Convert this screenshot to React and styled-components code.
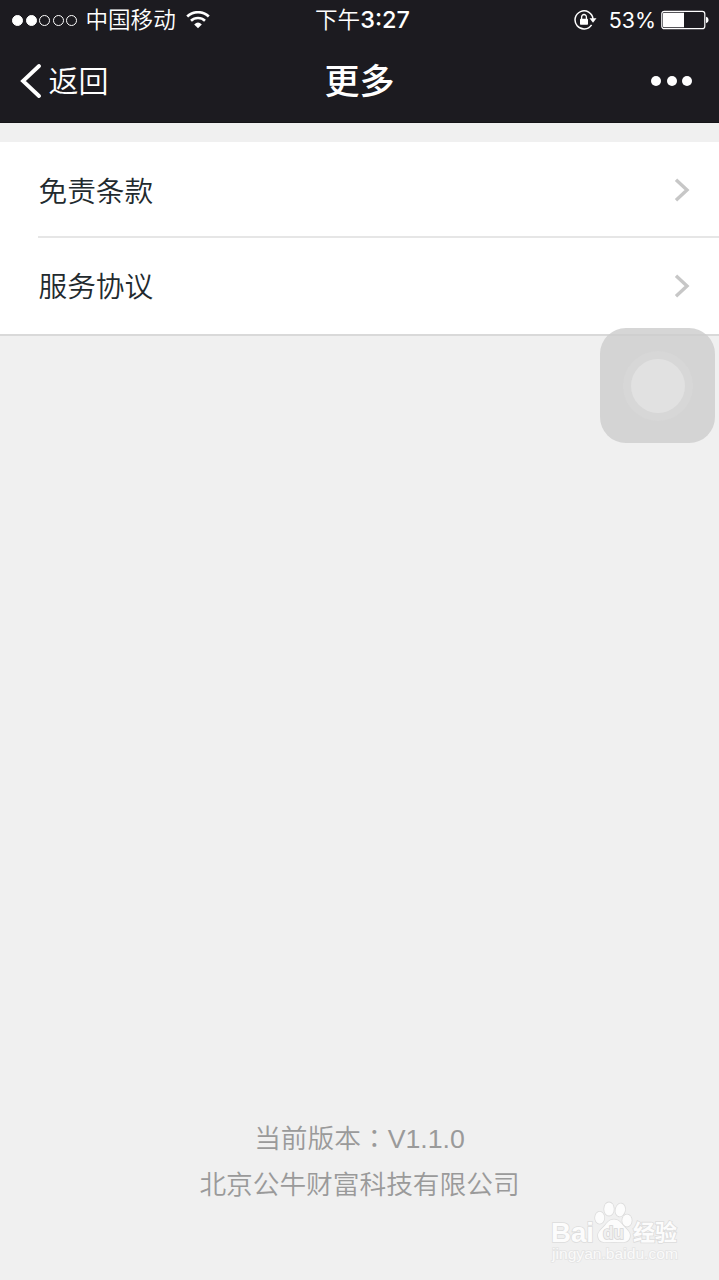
import styled, { createGlobalStyle } from "styled-components";

const GlobalStyle = createGlobalStyle`
  * {
    box-sizing: border-box;
  }

  body {
    margin: 0;
    background-color: #f0f0f0;
    font-family: "Inter", "Noto Sans CJK SC", sans-serif;
  }
`;

const Wrapper = styled.div`
  position: relative;
  display: flex;
  flex-direction: column;
  width: 719px;
  height: 1280px;
  overflow: hidden;
  background-color: #f0f0f0;
`;

const Header = styled.header`
  height: 123px;
  background-color: #1c1b20;
  border-bottom: 1px solid #141317;
  color: white;
`;

const StatusBar = styled.div`
  display: grid;
  grid-template-columns: 1fr auto 1fr;
  align-items: center;
  height: 40px;
  padding: 0 10px 0 12px;
  font-size: 22.6px;
  line-height: 40px;
`;

const StatusSide = styled.div`
  display: flex;
  align-items: center;
  justify-content: ${(props) => (props.$end ? "flex-end" : "flex-start")};
`;

const Signal = styled.div`
  display: flex;
  gap: 2.6px;
  margin-right: 8px;
`;

const SignalDot = styled.span`
  width: 11px;
  height: 11px;
  border: 1px solid white;
  border-radius: 50%;
  background-color: ${(props) => (props.$on ? "white" : "transparent")};
`;

const Carrier = styled.span`
  margin-right: 10px;
  font-weight: 350;
`;

const Time = styled.span`
  display: flex;
  padding-left: 4px;
  font-weight: 350;

  b {
    font-size: 23.5px;
    font-weight: 500;
  }
`;

const Percent = styled.span`
  margin: 0 5px 0 12px;
  font-size: 21.4px;
`;

const NavBar = styled.nav`
  display: grid;
  grid-template-columns: 1fr auto 1fr;
  align-items: center;
  height: 82px;
  padding: 0 27px 0 20px;
`;

const Back = styled.div`
  display: flex;
  align-items: center;
  gap: 6.5px;
  font-size: 30px;
  font-weight: 350;
  line-height: 40px;
`;

const Title = styled.h1`
  margin: 0;
  padding-left: 7px;
  font-size: 35px;
  font-weight: 500;
  line-height: 40px;
`;

const More = styled.div`
  display: flex;
  justify-content: flex-end;
  gap: 5.5px;
`;

const MoreDot = styled.span`
  width: 10px;
  height: 10px;
  border-radius: 50%;
  background-color: white;
`;

const List = styled.div`
  margin-top: 19px;
  padding-left: 38px;
  background-color: white;
  border-bottom: 2px solid #d9d9d9;
`;

const Row = styled.div`
  display: flex;
  align-items: center;
  justify-content: space-between;
  height: 96px;
  padding-right: 29px;
  padding-left: 0.5px;
  color: #222a2e;
  font-size: 28.7px;
  font-weight: 350;

  svg {
    margin-top: 2px;
  }

  &:not(:last-child) {
    border-bottom: 2px solid #e6e6e6;
  }

  &:last-child {
    padding-bottom: 3px;
  }
`;

const TouchButton = styled.div`
  position: absolute;
  top: 328px;
  left: 600px;
  display: grid;
  place-items: center;
  width: 115px;
  height: 115px;
  border-radius: 26px;
  background-color: rgba(205, 205, 205, 0.82);
`;

const Ring = styled.div`
  display: grid;
  place-items: center;
  width: ${(props) => props.$size}px;
  height: ${(props) => props.$size}px;
  border-radius: 50%;
  background-color: ${(props) => props.$color};
`;

const Footer = styled.footer`
  margin-top: auto;
  margin-bottom: 72px;
  color: #9a9a9a;
  font-family: "Liberation Sans", "Noto Sans CJK SC", sans-serif;
  font-size: 26.7px;
  font-weight: 350;
  line-height: 46px;
  text-align: center;

  p {
    margin: 0;
  }
`;

// the traditional face keeps the colon in the middle of its box
const Colon = styled.span`
  font-family: "Noto Sans CJK TC", sans-serif;
`;

const Watermark = styled.svg`
  position: absolute;
  left: 545px;
  top: 1196px;
`;

const rows = ["免责条款", "服务协议"];

function Wifi() {
  return (
    <svg width="24" height="18" viewBox="0 0 24 18" fill="none" stroke="white">
      <path d="M1.2 5.5a15.8 15.8 0 0 1 21.6 0" strokeWidth="2.7" />
      <path d="M5 9.8a10.2 10.2 0 0 1 14 0" strokeWidth="2.6" />
      <path d="M8.2 13.4Q12 9.6 15.8 13.4L12 17.2Z" fill="white" stroke="none" />
    </svg>
  );
}

function RotationLock() {
  return (
    <svg width="23" height="20" viewBox="0 0 23 20" fill="none" stroke="white">
      <path d="M17.6 14.8A9 9 0 1 1 19 9" strokeWidth="1.5" />
      <path d="M15.5 8.2h7L19 12.8Z" fill="white" stroke="none" />
      <rect x="6" y="8.7" width="8" height="6" rx="0.7" fill="white" stroke="none" />
      <path d="M7.6 9V6.9a2.4 2.4 0 0 1 4.8 0V9" strokeWidth="1.3" />
    </svg>
  );
}

function Battery() {
  return (
    <svg width="48" height="20" viewBox="0 0 48 20">
      <rect x="0.8" y="1.3" width="43" height="17.4" rx="2.5" fill="none" stroke="white" strokeWidth="1.2" />
      <path d="M3 2.8h20v14.4H3a1 1 0 0 1-1-1V3.8a1 1 0 0 1 1-1Z" fill="white" />
      <path d="M45 6.8q2.6.6 2.6 3.2T45 13.2Z" fill="white" />
    </svg>
  );
}

function ChevronRight() {
  return (
    <svg width="16" height="24" viewBox="0 0 16 24" fill="none">
      <path d="M2 1.8 13 12 2 22.2" stroke="#c7c7c7" strokeWidth="3.4" />
    </svg>
  );
}

function BaiduMark() {
  return (
    <Watermark width="150" height="72" viewBox="0 0 150 72">
      <g
        fill="#fcfcfc"
        stroke="#dcdcdc"
        strokeWidth="1.6"
        paintOrder="stroke"
        fontFamily='"Liberation Sans", "Noto Sans CJK SC", sans-serif'
      >
        <text x="6" y="45.5" fontSize="28" fontWeight="700" textLength="43" lengthAdjust="spacingAndGlyphs">
          Bai
        </text>
        <ellipse cx="54.7" cy="21.8" rx="4.6" ry="6" />
        <ellipse cx="64" cy="13" rx="4.8" ry="6.6" />
        <ellipse cx="75.3" cy="14" rx="4.7" ry="6.5" transform="rotate(12 75.3 14)" />
        <ellipse cx="82" cy="24.6" rx="4.7" ry="6" />
        <path d="M69 23.5c-5 0-6.5 3-9.500 6.500s-7.500 6-6.300 11c1.500 7 8.800 5 15.800 5s14.300 2 15.800-5c1.200-5-3.300-7.500-6.300-11s-4.500-6.500-9.500-6.500Z" />
        <text x="58" y="43" fontSize="18" fontWeight="700" fill="#f0f0f0" stroke="#d6d6d6" textLength="21" lengthAdjust="spacingAndGlyphs">
          du
        </text>
        <text x="88" y="44" fontSize="22" fontWeight="700">
          经验
        </text>
        <text
          x="7"
          y="63"
          fontSize="14"
          strokeWidth="1.5"
          stroke="#e4e4e4"
          fill="#fafafa"
          textLength="126"
          lengthAdjust="spacingAndGlyphs"
        >
          jingyan.baidu.com
        </text>
      </g>
    </Watermark>
  );
}

export default function App() {
  return (
    <Wrapper>
      <GlobalStyle />
      <Header>
        <StatusBar>
          <StatusSide>
            <Signal>
              {[1, 2, 3, 4, 5].map((n) => (
                <SignalDot key={n} $on={n < 3} />
              ))}
            </Signal>
            <Carrier>中国移动</Carrier>
            <Wifi />
          </StatusSide>
          <Time>
            下午<b>3:27</b>
          </Time>
          <StatusSide $end>
            <RotationLock />
            <Percent>53%</Percent>
            <Battery />
          </StatusSide>
        </StatusBar>
        <NavBar>
          <Back>
            <svg width="22" height="34" viewBox="0 0 22 34" fill="none">
              <path d="M19 2 3 17l16 15" stroke="white" strokeWidth="3.8" strokeLinecap="round" />
            </svg>
            返回
          </Back>
          <Title>更多</Title>
          <More>
            <MoreDot />
            <MoreDot />
            <MoreDot />
          </More>
        </NavBar>
      </Header>
      <List>
        {rows.map((row) => (
          <Row key={row}>
            {row}
            <ChevronRight />
          </Row>
        ))}
      </List>
      <TouchButton>
        <Ring $size={70} $color="#d7d7d7">
          <Ring $size={54} $color="#e1e1e1" />
        </Ring>
      </TouchButton>
      <Footer>
        <p>
          当前版本<Colon>：</Colon>V1.1.0
        </p>
        <p>北京公牛财富科技有限公司</p>
      </Footer>
      <BaiduMark />
    </Wrapper>
  );
}
